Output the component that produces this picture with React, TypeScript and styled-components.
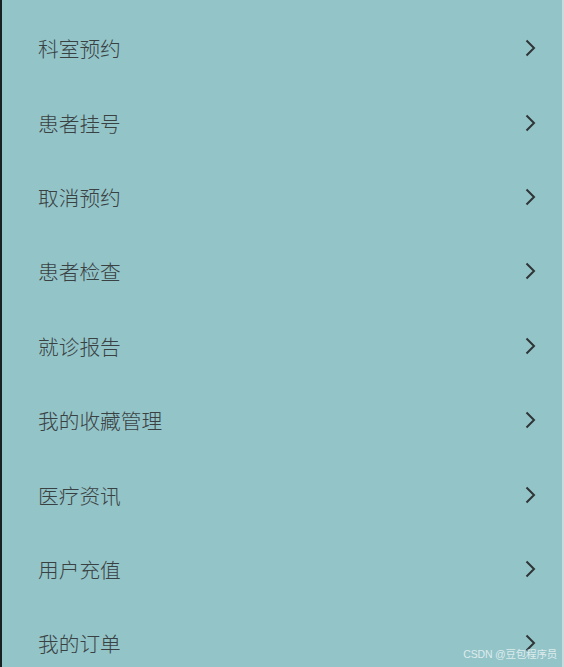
import React from 'react';
import styled, { createGlobalStyle } from 'styled-components';

const GlobalStyle = createGlobalStyle`
  html, body {
    margin: 0;
    padding: 0;
    background: #93c4c8;
  }
  body {
    font-family: "Microsoft YaHei", "Noto Sans CJK SC", "Liberation Sans", sans-serif;
  }
`;

const Page = styled.div`
  position: relative;
  box-sizing: border-box;
  width: 564px;
  height: 667px;
  overflow: hidden;
  background: #93c4c8;
  border-left: 2px solid #182122;
  border-right: 2px solid #c9dcdd;
  padding-top: 11px;
`;

const List = styled.ul`
  list-style: none;
  margin: 0;
  padding: 0;
`;

const Item = styled.li`
  display: flex;
  align-items: center;
  justify-content: space-between;
  height: 74.4px;
  padding: 0 26px 0 36px;
  cursor: pointer;
`;

const Label = styled.span`
  font-size: 20.7px;
  font-weight: 300;
  color: #3a4142;
`;

const Watermark = styled.div`
  position: absolute;
  right: 5px;
  bottom: 6px;
  font-family: "Liberation Sans", "Noto Sans CJK SC", sans-serif;
  font-size: 10.5px;
  letter-spacing: -0.2px;
  color: rgba(255, 255, 255, 0.7);
`;

const Chevron = () => (
  <svg width="11" height="18" viewBox="0 0 11 18" fill="none">
    <path d="M1.5 1.5 L9 9 L1.5 16.5" stroke="#2f3536" strokeWidth="2" />
  </svg>
);

const menus = ['科室预约', '患者挂号', '取消预约', '患者检查', '就诊报告', '我的收藏管理', '医疗资讯', '用户充值', '我的订单'];

function App() {
  return (
    <>
      <GlobalStyle />
      <Page>
        <List>
          {menus.map((m) => (
            <Item key={m}>
              <Label>{m}</Label>
              <Chevron />
            </Item>
          ))}
        </List>
        <Watermark>CSDN @豆包程序员</Watermark>
      </Page>
    </>
  );
}

export default App;
